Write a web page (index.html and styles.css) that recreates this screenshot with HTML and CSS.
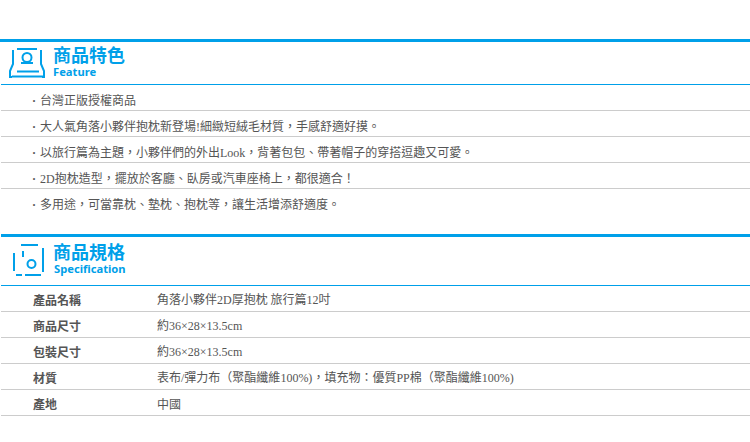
FILE: index.html
```html
<!DOCTYPE html>
<html lang="zh-Hant">
<head>
<meta charset="utf-8">
<title>商品特色</title>
<link rel="stylesheet" href="styles.css">
</head>
<body>
<section class="section feature">
  <header class="head">
    <svg class="icon" width="50" height="42" viewBox="0 0 50 42" fill="none" stroke="#00a0e9" stroke-width="2">
      <path d="M17 7H37M13 8V22L10 29V35H12M41 8V22L44 29V35H42M21 21H33M17 29.500H39M12 34.500H43"/>
      <circle cx="27" cy="15.500" r="4.500"/>
    </svg>
    <div class="titles">
      <h2 class="title">商品特色</h2>
      <p class="sub">Feature</p>
    </div>
  </header>
  <ul class="list">
    <li class="item"><span class="dot">·</span>台灣正版授權商品</li>
    <li class="item"><span class="dot">·</span>大人氣角落小夥伴抱枕新登場<span class="lat">!</span>細緻短絨毛材質，手感舒適好摸。</li>
    <li class="item"><span class="dot">·</span>以旅行篇為主題，小夥伴們的外出<span class="lat">Look</span>，背著包包、帶著帽子的穿搭逗趣又可愛。</li>
    <li class="item"><span class="dot">·</span><span class="lat">2D</span>抱枕造型，擺放於客廳、臥房或汽車座椅上，都很適合！</li>
    <li class="item"><span class="dot">·</span>多用途，可當靠枕、墊枕、抱枕等，讓生活增添舒適度。</li>
  </ul>
</section>
<section class="section spec">
  <header class="head head-spec">
    <svg class="icon" width="50" height="48" viewBox="0 0 50 48" fill="none" stroke="#00a0e9" stroke-width="2">
      <path d="M21 8H38M43 11V35M14 16V34M23 14V20M16 38H22M25 38H41"/>
      <circle cx="31.500" cy="27" r="4"/>
    </svg>
    <div class="titles">
      <h2 class="title">商品規格</h2>
      <p class="sub">Specification</p>
    </div>
  </header>
  <dl class="table">
    <div class="row"><dt class="label">產品名稱</dt><dd class="value">角落小夥伴<span class="lat">2D</span>厚抱枕 旅行篇<span class="lat">12</span>吋</dd></div>
    <div class="row"><dt class="label">商品尺寸</dt><dd class="value">約<span class="lat">36×28×13.5cm</span></dd></div>
    <div class="row"><dt class="label">包裝尺寸</dt><dd class="value">約<span class="lat">36×28×13.5cm</span></dd></div>
    <div class="row"><dt class="label">材質</dt><dd class="value">表布<span class="lat">/</span>彈力布（聚酯纖維<span class="lat">100%)</span>，填充物：優質<span class="lat">PP</span>棉（聚酯纖維<span class="lat">100%)</span></dd></div>
    <div class="row"><dt class="label">產地</dt><dd class="value">中國</dd></div>
  </dl>
</section>
</body>
</html>
```
FILE: styles.css
```css
* { box-sizing: border-box; }
html, body { margin: 0; padding: 0; background: #fff; }
body {
  width: 750px;
  height: 442px;
  overflow: hidden;
  padding-top: 39px;
  font-family: "Noto Sans CJK TC", "Liberation Serif", serif;
  font-size: 12px;
  color: #555;
}
.section { border-top: 3px solid #00a0e9; }
.spec { margin-left: 1px; margin-top: 19px; }
.head {
  height: 43px;
  display: flex;
  align-items: flex-start;
  border-bottom: 1px solid #00a0e9;
  margin-left: 1px;
}
.head-spec { height: 49px; margin-left: 0; }
.feature .icon { margin-left: -1px; flex: none; }
.spec .icon { margin-left: -1px; flex: none; }
.feature .titles { margin-left: 3px; padding-top: 1px; }
.spec .titles { margin-left: 3px; padding-top: 3px; }
.title {
  margin: 0;
  font-size: 18px;
  line-height: 22px;
  font-weight: 700;
  color: #00a0e9;
}
.sub {
  margin: 0;
  font-family: "Noto Sans", sans-serif;
  font-size: 11.200px;
  line-height: 14px;
  font-weight: 700;
  color: #00a0e9;
}
.spec .sub { padding-left: 1px; }
.list { list-style: none; margin: 0; padding: 0; }
.item {
  height: 26px;
  margin-left: 1px;
  padding: 4px 0 0 31px;
  line-height: 22px;
  border-bottom: 1px solid #ccc;
  white-space: nowrap;
}
.item:last-child { border-bottom: 0; }
.dot { display: inline-block; width: 8px; font-family: "Liberation Serif", serif; font-weight: 700; }
.lat { font-family: "Liberation Serif", serif; }
.table { margin: 0; }
.row {
  height: 26px;
  display: flex;
  align-items: center;
  padding-top: 1px;
  border-bottom: 1px solid #ccc;
}
.label { width: 156px; padding-left: 32px; font-weight: 700; }
.value { margin: 0; }
```
